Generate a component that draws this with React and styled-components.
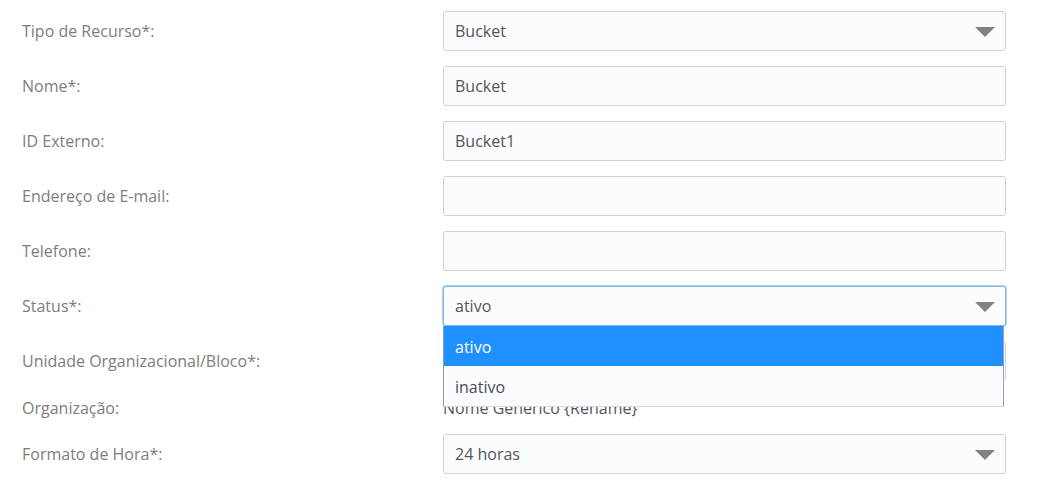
import React from "react";
import styled, { createGlobalStyle } from "styled-components";

const GlobalStyle = createGlobalStyle`
  body {
    margin: 0;
    background: #ffffff;
    font-family: "Open Sans", "Noto Sans", sans-serif;
  }
`;

const rows = [
  { label: "Tipo de Recurso*:", value: "Bucket", select: true },
  { label: "Nome*:", value: "Bucket" },
  { label: "ID Externo:", value: "Bucket1" },
  { label: "Endereço de E-mail:", value: "" },
  { label: "Telefone:", value: "" },
];

const Arrow = () => (
  <ArrowIcon width="20" height="10" viewBox="0 0 20 10">
    <path d="M0 0 L20 0 L10 10 Z" fill="#7f8386" />
  </ArrowIcon>
);

const App = () => {
  return (
    <>
      <GlobalStyle />
      <Form>
        {rows.map((r) => (
          <Row key={r.label}>
            <Label>{r.label}</Label>
            <Field>
              {r.value}
              {r.select && <Arrow />}
            </Field>
          </Row>
        ))}
        <Row>
          <Label>Status*:</Label>
          <Holder>
            <Field focused>
              ativo
              <Arrow />
            </Field>
            <Menu>
              <Option active>ativo</Option>
              <Option>inativo</Option>
            </Menu>
          </Holder>
        </Row>
        <Row>
          <Label>Unidade Organizacional/Bloco*:</Label>
          <Field>
            <Arrow />
          </Field>
        </Row>
        <Row short>
          <Label>Organização:</Label>
          <Plain>Nome Genérico {"{Rename}"}</Plain>
        </Row>
        <Row>
          <Label>Formato de Hora*:</Label>
          <Field>
            24 horas
            <Arrow />
          </Field>
        </Row>
      </Form>
    </>
  );
};

// styled components
const Form = styled.div`
  padding: 11px 0 0 22px;
  width: 1038px;
  box-sizing: border-box;
`;

const Row = styled.div`
  display: grid;
  grid-template-columns: 421px 563px;
  align-items: center;
  height: ${(p) => (p.short ? "23px" : "40px")};
  margin-bottom: 15px;
`;

const Label = styled.div`
  font-size: 16px;
  color: #7d7d7d;
  white-space: nowrap;
`;

const Holder = styled.div`
  position: relative;
`;

const Field = styled.div`
  position: relative;
  display: flex;
  align-items: center;
  height: 40px;
  box-sizing: border-box;
  padding-left: 11px;
  border: 1px solid ${(p) => (p.focused ? "#86b6e6" : "#cdd2d7")};
  box-shadow: ${(p) => (p.focused ? "0 0 0 1px #b4d2f0" : "none")};
  border-radius: 3px;
  background: #fbfcfd;
  font-size: 16px;
  color: #555555;
`;

const ArrowIcon = styled.svg`
  position: absolute;
  right: 10px;
  top: 15px;
`;

const Menu = styled.div`
  position: absolute;
  top: 40px;
  left: 0;
  width: 561px;
  background: #fbfcfd;
  border-left: 1px solid #7d9bd2;
  border-right: 1px solid #8ea3c9;
  border-bottom: 1px solid #d9d9d9;
  box-sizing: border-box;
  z-index: 2;
`;

const Option = styled.div`
  height: 40px;
  display: flex;
  align-items: center;
  padding-left: 11px;
  padding-top: 2px;
  box-sizing: border-box;
  font-size: 16px;
  background: ${(p) => (p.active ? "#1e90ff" : "transparent")};
  color: ${(p) => (p.active ? "#ffffff" : "#4a4a58")};
`;

const Plain = styled.div`
  font-size: 16px;
  color: #555555;
`;

export default App;
